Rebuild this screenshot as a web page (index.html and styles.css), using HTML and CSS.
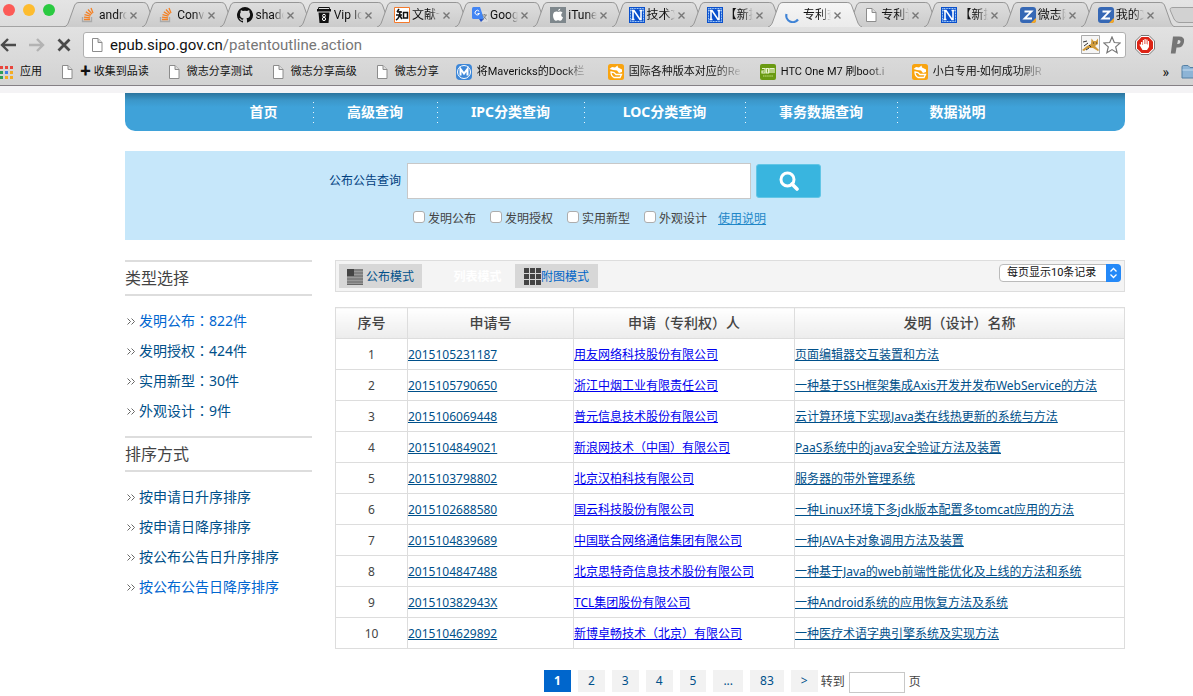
FILE: index.html
```html
<!DOCTYPE html>
<html lang="zh-CN">
<head>
<meta charset="utf-8">
<title>专利查询</title>
<link rel="stylesheet" href="styles.css">
</head>
<body>
<svg class="defs" aria-hidden="true">
  <defs>
    <linearGradient id="tabfill" x1="0" y1="0" x2="0" y2="1"><stop offset="0" stop-color="#dedede"/><stop offset="1" stop-color="#cbcbcb"/></linearGradient>
    <linearGradient id="activefill" x1="0" y1="0" x2="0" y2="1"><stop offset="0" stop-color="#f6f6f6"/><stop offset="1" stop-color="#ebebeb"/></linearGradient>
  </defs>
  <symbol id="shape" viewBox="0 0 94 25" preserveAspectRatio="none"><path d="M0 25C3 24 4 22 5 19L10 5C11 2 12 .5 15 .5H79C82 .5 83 2 84 5L89 19C90 22 91 24 94 25" stroke="#969696" vector-effect="non-scaling-stroke"/></symbol>
  <symbol id="stack" viewBox="0 0 16 16"><path d="M1.500 10V14.500H10.500V10" fill="none" stroke="#aaa" stroke-width="1.300"/><path d="M3 12.500H9M3 10.200L9 10.800M3.500 7.600L9.300 9.200M4.800 4.900L10 8M7 2.500L11 7M10 1L12 6" stroke="#f48024" stroke-width="1.300"/></symbol>
  <symbol id="doc" viewBox="0 0 16 16"><path d="M3.500 1.500H9L13 5.500V14.500H3.500Z" fill="#fff" stroke="#8c8c8c"/><path d="M9 1.500V5.500H13" fill="#ddd" stroke="#8c8c8c"/></symbol>
  <symbol id="ncms" viewBox="0 0 16 16"><path d="M0 0H16V16H0Z" fill="#0a50cc"/><path d="M1.500 1.500H14.500V14.500H1.500Z" fill="none" stroke="#b8dcff" stroke-dasharray="1 .6"/><path d="M4 12.500V3.500H5L11 12.500H12V3.500M2.500 3.500H5.500M2.500 12.500H5.500M10.500 3.500H13.500" fill="none" stroke="#fff" stroke-width="1.600"/></symbol>
  <symbol id="zed" viewBox="0 0 16 16"><rect width="16" height="16" rx="3" fill="#3668b5"/><path d="M4.500 4.500H11.500L4.500 11.500H12" fill="none" stroke="#fff" stroke-width="1.800"/><path d="M16 11V13.500Q16 16 13.500 16H11Z" fill="#f7a823"/></symbol>
  <symbol id="gold" viewBox="0 0 16 16"><rect width="16" height="16" rx="2.500" fill="#f9a410"/><path d="M1.500 5L4 3L7 3.500L9.500 1.500L10 3.500L14 5.500V8L11 9L9 6.500L5 6Z" fill="#fff"/><path d="M3 8L6 8.500L8 10.500H13.500L12 13.500H6Q3 12 3 8Z" fill="none" stroke="#fff" stroke-width="1.300"/></symbol>
  <symbol id="chev" viewBox="0 0 8 7"><path d="M.5 .5L3.500 3.500L.5 6.500M4.500 .5L7.500 3.500L4.500 6.500" fill="none" stroke="#555" stroke-width=".9"/></symbol>
</svg>

<header class="browser">
  <div class="tabstrip">
    <div class="lights"><i class="red"></i><i class="amber"></i><i class="green"></i></div>
    <div class="tabs">
      <div class="tab"><svg class="shape"><use href="#shape"/></svg><svg class="fav"><use href="#stack"/></svg><span>andro</span><button aria-label="关闭"><svg viewBox="0 0 7 7"><path d="M.5 .5L6.500 6.500M6.500 .5L.5 6.500"/></svg></button></div>
      <div class="tab"><svg class="shape"><use href="#shape"/></svg><svg class="fav"><use href="#stack"/></svg><span>Conv</span><button aria-label="关闭"><svg viewBox="0 0 7 7"><path d="M.5 .5L6.500 6.500M6.500 .5L.5 6.500"/></svg></button></div>
      <div class="tab"><svg class="shape"><use href="#shape"/></svg><svg class="fav" viewBox="0 0 16 16"><path d="M8 0A8 8 0 0 0 5.500 15.600C5.900 15.700 6 15.400 6 15.200V13.700C3.800 14.200 3.300 12.700 3.300 12.700C2.900 11.800 2.400 11.500 2.400 11.500C1.700 11 2.500 11 2.500 11C3.300 11.100 3.700 11.800 3.700 11.800C4.400 13.100 5.600 12.700 6.100 12.500C6.100 12 6.300 11.600 6.600 11.400C4.800 11.200 3 10.500 3 7.500C3 6.600 3.300 5.900 3.800 5.300C3.700 5.100 3.400 4.300 3.900 3.200C3.900 3.200 4.600 3 6 4A7.500 7.500 0 0 1 10 4C11.500 3 12.200 3.200 12.200 3.200C12.600 4.300 12.400 5.100 12.300 5.300C12.800 5.900 13.100 6.600 13.100 7.500C13.100 10.500 11.200 11.200 9.400 11.400C9.700 11.700 10 12.200 10 12.900V15.200C10 15.400 10.100 15.700 10.500 15.600A8 8 0 0 0 8 0Z" fill="#111"/></svg><span>shado</span><button aria-label="关闭"><svg viewBox="0 0 7 7"><path d="M.5 .5L6.500 6.500M6.500 .5L.5 6.500"/></svg></button></div>
      <div class="tab"><svg class="shape"><use href="#shape"/></svg><svg class="fav" viewBox="0 0 16 16"><path d="M2.500 0H13.500L14 2H15V4.500H1V2H2ZM2.500 5.500H13.500L12.500 16H3.500Z" fill="#111"/><path d="M3 1.500H13" stroke="#ddd"/><circle cx="8" cy="8.700" r="1.400" fill="none" stroke="#fff"/><circle cx="8" cy="12" r="1.600" fill="none" stroke="#fff"/></svg><span>Vip Ic</span><button aria-label="关闭"><svg viewBox="0 0 7 7"><path d="M.5 .5L6.500 6.500M6.500 .5L.5 6.500"/></svg></button></div>
      <div class="tab"><svg class="shape"><use href="#shape"/></svg><svg class="fav" viewBox="0 0 16 16"><path d="M.5 .5H15.500V15.500H.5Z" fill="#fff" stroke="#f47a2c"/><path d="M5 2L3 5M3 5H8M2 8H8M6 4Q6 11 2 13M6 9L8 12M9.500 5.500H13.500V11H9.500Z" fill="none" stroke="#111" stroke-width="1.500"/></svg><span>文献一</span><button aria-label="关闭"><svg viewBox="0 0 7 7"><path d="M.5 .5L6.500 6.500M6.500 .5L.5 6.500"/></svg></button></div>
      <div class="tab"><svg class="shape"><use href="#shape"/></svg><svg class="fav" viewBox="0 0 16 16"><path d="M6 4H14.500Q16 4 16 5.500V13.500Q16 15 14.500 15H9Z" fill="#ddd"/><path d="M1.500 0H8L12 12H1.500Q0 12 0 10.500V1.500Q0 0 1.500 0Z" fill="#4285f4"/><path d="M7 12H12L9 15Z" fill="#2a56c6"/><path d="M7.200 4.300A2.300 2.300 0 1 0 7.500 6.500H5.500" fill="none" stroke="#fff"/><path d="M10 8H15M12.500 7V8M14 8Q13 11 10.500 12.500M11.500 9L14.500 12.500" fill="none" stroke="#777" stroke-width=".8"/></svg><span>Goog</span><button aria-label="关闭"><svg viewBox="0 0 7 7"><path d="M.5 .5L6.500 6.500M6.500 .5L.5 6.500"/></svg></button></div>
      <div class="tab"><svg class="shape"><use href="#shape"/></svg><svg class="fav" viewBox="0 0 16 16"><path d="M0 0H16V16H0Z" fill="#7e878c"/><path d="M8 5C9 4.500 11 4 12.500 5.700C10.500 7 11 9.500 13 10.300C12.500 12 11.300 13.800 10.300 13.800C9.500 13.800 9 13.300 8 13.300C7 13.300 6.500 13.800 5.800 13.800C4 13.500 2.500 9.500 3.200 7C4 4.500 6.500 4.200 8 5ZM8 4Q8 2 10.300 1.400Q10.500 3.500 8 4Z" fill="#fff"/></svg><span>iTune</span><button aria-label="关闭"><svg viewBox="0 0 7 7"><path d="M.5 .5L6.500 6.500M6.500 .5L.5 6.500"/></svg></button></div>
      <div class="tab"><svg class="shape"><use href="#shape"/></svg><svg class="fav"><use href="#ncms"/></svg><span>技术文</span><button aria-label="关闭"><svg viewBox="0 0 7 7"><path d="M.5 .5L6.500 6.500M6.500 .5L.5 6.500"/></svg></button></div>
      <div class="tab"><svg class="shape"><use href="#shape"/></svg><svg class="fav"><use href="#ncms"/></svg><span>【新提</span><button aria-label="关闭"><svg viewBox="0 0 7 7"><path d="M.5 .5L6.500 6.500M6.500 .5L.5 6.500"/></svg></button></div>
      <div class="tab active"><svg class="shape"><use href="#shape"/></svg><svg class="fav" viewBox="0 0 16 16"><path d="M1.500 7A6.500 6.500 0 0 0 13 12.500" fill="none" stroke="#3f83d6" stroke-width="2.200"/></svg><span>专利查</span><button aria-label="关闭"><svg viewBox="0 0 7 7"><path d="M.5 .5L6.500 6.500M6.500 .5L.5 6.500"/></svg></button></div>
      <div class="tab"><svg class="shape"><use href="#shape"/></svg><svg class="fav"><use href="#doc"/></svg><span>专利讠</span><button aria-label="关闭"><svg viewBox="0 0 7 7"><path d="M.5 .5L6.500 6.500M6.500 .5L.5 6.500"/></svg></button></div>
      <div class="tab"><svg class="shape"><use href="#shape"/></svg><svg class="fav"><use href="#ncms"/></svg><span>【新提</span><button aria-label="关闭"><svg viewBox="0 0 7 7"><path d="M.5 .5L6.500 6.500M6.500 .5L.5 6.500"/></svg></button></div>
      <div class="tab"><svg class="shape"><use href="#shape"/></svg><svg class="fav"><use href="#zed"/></svg><span>微志网</span><button aria-label="关闭"><svg viewBox="0 0 7 7"><path d="M.5 .5L6.500 6.500M6.500 .5L.5 6.500"/></svg></button></div>
      <div class="tab"><svg class="shape"><use href="#shape"/></svg><svg class="fav"><use href="#zed"/></svg><span>我的文</span><button aria-label="关闭"><svg viewBox="0 0 7 7"><path d="M.5 .5L6.500 6.500M6.500 .5L.5 6.500"/></svg></button></div>
    </div>
    <button class="newtab" aria-label="新标签页"><svg viewBox="0 0 26 18"><path d="M30 .5H6Q2 .5 3.500 4L7 12Q9 15.500 12 15.500H30" fill="#d2d2d2" stroke="#a0a0a0"/></svg></button>
  </div>

  <div class="toolbar">
    <button class="nav-back" aria-label="后退"><svg viewBox="0 0 16 14"><path d="M8 1L2 7L8 13M2.500 7H16" fill="none" stroke="#4a4a4a" stroke-width="2.400"/></svg></button>
    <button class="nav-forward" aria-label="前进"><svg viewBox="0 0 16 14"><path d="M8 1L14 7L8 13M0 7H13.500" fill="none" stroke="#b3b3b3" stroke-width="2.400"/></svg></button>
    <button class="nav-stop" aria-label="停止"><svg viewBox="0 0 14 14"><path d="M1.500 1.500L12.500 12.500M12.500 1.500L1.500 12.500" stroke="#4a4a4a" stroke-width="2.800"/></svg></button>
    <div class="omnibox">
      <svg class="fav"><use href="#doc"/></svg>
      <a class="url" href="#">epub.sipo.gov.cn<span>/patentoutline.action</span></a>
      <svg class="cat" viewBox="0 0 19 19"><path d="M.5 .5H18.500V18.500H.5Z" fill="#f5f5f5" stroke="#aaa"/><path d="M1 15L6 11L10 9L10.500 3.500L12.500 6L15 6L17 3.500V9L14 11L18 15L17 16L12 13L7 13L3 16Z" fill="#cf9a3b"/><path d="M2 7L6 6M3 11L7 8M8 10L10 12M12 8H13M15 8H16M5 15L8 13" stroke="#333"/></svg>
      <svg class="star" viewBox="0 0 18 18"><path d="M9 1L11.300 6.500L17.200 7L12.700 10.900L14.100 16.700L9 13.600L3.900 16.700L5.300 10.900L.8 7L6.700 6.500Z" fill="#fff" stroke="#777" stroke-width="1.200"/></svg>
    </div>
    <svg class="ext-block" viewBox="0 0 20 20"><path d="M6 .5H14L19.500 6V14L14 19.500H6L.5 14V6Z" fill="#fff" stroke="#777"/><path d="M6.500 2H13.500L18 6.500V13.500L13.500 18H6.500L2 13.500V6.500Z" fill="#dd2416"/><path d="M6 7V10L5 9L4.500 10L7.500 15H12L14 12V6H13V9.500H12.500V4.500H11.300V9H10.700V4H9.500V9H9V5H7.800V10H7.300V7Z" fill="#fff"/></svg>
    <svg class="ext-p" viewBox="0 0 16 18"><path d="M3 .5H9Q15 .5 14 6Q13 11.500 8 11.500H6.500L5.500 17.500H.8ZM8 4L7.200 8Q10 8.500 10.500 6Q10.900 4 8 4Z" fill="#757575" fill-rule="evenodd"/></svg>
  </div>

  <nav class="bookmarks">
    <a class="apps" href="#"><svg viewBox="0 0 13 13"><path d="M0 0H3V3H0ZM5 0H8V3H5ZM10 0H13V3H10Z" fill="#e8453c"/><path d="M0 5H3V8H0Z" fill="#2f9e58"/><path d="M5 5H8V8H5Z" fill="#3f7fe8"/><path d="M10 5H13V8H10ZM10 10H13V13H10ZM5 10H8V13H5Z" fill="#f4ac22"/><path d="M0 10H3V13H0Z" fill="#2f9e58"/></svg><span>应用</span></a>
    <a href="#"><svg><use href="#doc"/></svg><span>✚ 收集到品读</span></a>
    <a href="#"><svg><use href="#doc"/></svg><span>微志分享测试</span></a>
    <a href="#"><svg><use href="#doc"/></svg><span>微志分享高级</span></a>
    <a href="#"><svg><use href="#doc"/></svg><span>微志分享</span></a>
    <a class="long" href="#"><svg viewBox="0 0 16 16"><rect width="16" height="16" rx="4" fill="#3d87d8"/><circle cx="8" cy="8" r="6.500" fill="none" stroke="#fff"/><path d="M4.500 11.500V5L8 9.500L11.500 5V11.500" fill="none" stroke="#fff" stroke-width="2"/></svg><span>将Mavericks的Dock栏</span></a>
    <a class="long" href="#"><svg><use href="#gold"/></svg><span>国际各种版本对应的Re</span></a>
    <a class="long" href="#"><svg viewBox="0 0 16 16"><rect width="16" height="16" rx="2" fill="#6a9a12"/><path d="M2 4.500H5V9H2V7H4M6.500 4.500V9H8.500V4.500ZM10 9V4.500H14V9M12 4.500V9" fill="none" stroke="#e8f3cc" stroke-width="1.200"/><path d="M3 12H13" stroke="#c5df83" stroke-dasharray="1.500 .6"/></svg><span>HTC One M7 刷boot.i</span></a>
    <a class="long" href="#"><svg><use href="#gold"/></svg><span>小白专用-如何成功刷R</span></a>
    <button class="more" aria-label="更多书签">»</button>
    <svg class="folder" viewBox="0 0 12 14"><path d="M1 13V2Q1 .5 2.500 .5H7L9 2.500H14V13Z" fill="#8db4d6" stroke="#5580a5"/><path d="M1.500 5H14" stroke="#c5dcef"/></svg>
  </nav>
</header>

<div class="page">
  <nav class="mainnav">
    <a href="#">首页</a><a href="#">高级查询</a><a href="#">IPC分类查询</a><a href="#">LOC分类查询</a><a href="#">事务数据查询</a><a href="#">数据说明</a>
  </nav>

  <form class="search">
    <div class="query">
      <label for="q">公布公告查询</label>
      <input id="q" type="text">
      <button type="button" aria-label="查询"><svg viewBox="0 0 20 20"><circle cx="8.500" cy="8.500" r="6.500" fill="none" stroke="#fff" stroke-width="3"/><path d="M13 13L18 18" stroke="#fff" stroke-width="3.600" stroke-linecap="round"/></svg></button>
    </div>
    <div class="kinds">
      <label><input type="checkbox">发明公布</label>
      <label><input type="checkbox">发明授权</label>
      <label><input type="checkbox">实用新型</label>
      <label><input type="checkbox">外观设计</label>
      <a href="#">使用说明</a>
    </div>
  </form>

  <div class="columns">
    <aside class="sidebar">
      <h2>类型选择</h2>
      <ul>
        <li><svg><use href="#chev"/></svg><a class="current" href="#">发明公布<span class="mid" lang="zh-Hant">：</span>822件</a></li>
        <li><svg><use href="#chev"/></svg><a href="#">发明授权<span class="mid" lang="zh-Hant">：</span>424件</a></li>
        <li><svg><use href="#chev"/></svg><a href="#">实用新型<span class="mid" lang="zh-Hant">：</span>30件</a></li>
        <li><svg><use href="#chev"/></svg><a href="#">外观设计<span class="mid" lang="zh-Hant">：</span>9件</a></li>
      </ul>
      <h2>排序方式</h2>
      <ul>
        <li><svg><use href="#chev"/></svg><a href="#">按申请日升序排序</a></li>
        <li><svg><use href="#chev"/></svg><a href="#">按申请日降序排序</a></li>
        <li><svg><use href="#chev"/></svg><a href="#">按公布公告日升序排序</a></li>
        <li><svg><use href="#chev"/></svg><a class="current" href="#">按公布公告日降序排序</a></li>
      </ul>
    </aside>

    <main class="results">
      <div class="modes">
        <button class="mode"><svg class="lines" viewBox="0 0 16 16"><path d="M0 0H16V16H0Z" fill="#999"/><path d="M0 1H16M0 4H16M0 7H16M0 10H16M0 13H16M0 15.500H16" stroke="#666" stroke-width="1"/><path d="M0 0H7V7H0Z" fill="#444"/></svg>公布模式</button>
        <button class="mode selected">列表模式</button>
        <button class="mode picture"><svg viewBox="0 0 17 17"><path d="M0 0H5V5H0ZM6 0H11V5H6ZM12 0H17V5H12ZM0 6H5V11H0ZM6 6H11V11H6ZM12 6H17V11H12ZM0 12H5V17H0ZM6 12H11V17H6ZM12 12H17V17H12Z" fill="#444"/></svg>附图模式</button>
        <div class="pagesize">
          <select aria-label="每页显示"><option>每页显示10条记录</option></select>
          <svg viewBox="0 0 15 18"><path d="M0 0H11Q15 0 15 4V14Q15 18 11 18H0Z" fill="#2489f8"/><path d="M4.500 7.500L7.500 4.500L10.500 7.500M4.500 10.500L7.500 13.500L10.500 10.500" fill="none" stroke="#fff" stroke-width="1.300"/></svg>
        </div>
      </div>

      <table>
        <colgroup><col class="c-no"><col class="c-app"><col class="c-owner"><col></colgroup>
        <thead><tr><th>序号</th><th>申请号</th><th>申请<span class="mid" lang="zh-Hant">（</span>专利权<span class="mid" lang="zh-Hant">）</span>人</th><th>发明<span class="mid" lang="zh-Hant">（</span>设计<span class="mid" lang="zh-Hant">）</span>名称</th></tr></thead>
        <tbody>
          <tr><td>1</td><td><a href="#">2015105231187</a></td><td><a href="#">用友网络科技股份有限公司</a></td><td><a href="#">页面编辑器交互装置和方法</a></td></tr>
          <tr><td>2</td><td><a href="#">2015105790650</a></td><td><a href="#">浙江中烟工业有限责任公司</a></td><td><a href="#">一种基于SSH框架集成Axis开发并发布WebService的方法</a></td></tr>
          <tr><td>3</td><td><a href="#">2015106069448</a></td><td><a href="#">普元信息技术股份有限公司</a></td><td><a href="#">云计算环境下实现Java类在线热更新的系统与方法</a></td></tr>
          <tr><td>4</td><td><a href="#">2015104849021</a></td><td><a href="#">新浪网技术<span class="mid" lang="zh-Hant">（</span>中国<span class="mid" lang="zh-Hant">）</span>有限公司</a></td><td><a href="#">PaaS系统中的java安全验证方法及装置</a></td></tr>
          <tr><td>5</td><td><a href="#">2015103798802</a></td><td><a href="#">北京汉柏科技有限公司</a></td><td><a href="#">服务器的带外管理系统</a></td></tr>
          <tr><td>6</td><td><a href="#">2015102688580</a></td><td><a href="#">国云科技股份有限公司</a></td><td><a href="#">一种Linux环境下多jdk版本配置多tomcat应用的方法</a></td></tr>
          <tr><td>7</td><td><a href="#">2015104839689</a></td><td><a href="#">中国联合网络通信集团有限公司</a></td><td><a href="#">一种JAVA卡对象调用方法及装置</a></td></tr>
          <tr><td>8</td><td><a href="#">2015104847488</a></td><td><a href="#">北京思特奇信息技术股份有限公司</a></td><td><a href="#">一种基于Java的web前端性能优化及上线的方法和系统</a></td></tr>
          <tr><td>9</td><td><a href="#">201510382943X</a></td><td><a href="#">TCL集团股份有限公司</a></td><td><a href="#">一种Android系统的应用恢复方法及系统</a></td></tr>
          <tr><td>10</td><td><a href="#">2015104629892</a></td><td><a href="#">新博卓畅技术<span class="mid" lang="zh-Hant">（</span>北京<span class="mid" lang="zh-Hant">）</span>有限公司</a></td><td><a href="#">一种医疗术语字典引擎系统及实现方法</a></td></tr>
        </tbody>
      </table>

      <div class="pager">
        <a class="on" href="#">1</a><a href="#">2</a><a href="#">3</a><a href="#">4</a><a href="#">5</a><a href="#">...</a><a href="#">83</a><a href="#">&gt;</a>
        <div class="jump"><label for="goto">转到</label><input id="goto" type="text"><span>页</span></div>
      </div>
    </main>
  </div>
</div>
</body>
</html>
```
FILE: styles.css
```css
* { box-sizing: border-box; }
body {
  margin: 0;
  overflow-x: hidden;
  background: #fff;
  color: #444;
  font: 12px/18px "Noto Sans", "Noto Sans CJK SC", sans-serif;
}
a { text-decoration: none; color: inherit; }
button { border: 0; padding: 0; background: none; font: inherit; color: inherit; }
svg { display: block; flex: none; }
.defs { position: absolute; width: 0; height: 0; }
.mid { font-family: "Noto Sans CJK TC", sans-serif; line-height: 1; }

/* browser frame */
.browser {
  height: 93px;
  border-bottom: 7px solid #f4f3f5;
  background: linear-gradient(#e9e9e9, #d2d2d2);
  box-shadow: inset 0 -1px #858085;
  font-family: Roboto, "Noto Sans CJK SC", sans-serif;
  color: #111;
  overflow: hidden;
}
.tabstrip { display: flex; height: 27px; background: linear-gradient(#e4e4e4, #dcdcdc); box-shadow: inset 0 -1px #a3a3a3; }
.lights { flex: none; width: 72px; display: flex; gap: 8px; padding: 4px 0 0 3px; }
.lights i { width: 12px; height: 12px; border-radius: 50%; }
.red { background: #fc5b57; }
.amber { background: #fdbc2f; }
.green { background: #2aca41; }
.tabs { flex: 1; min-width: 0; display: flex; }
.tab { position: relative; flex: 1 1 0; min-width: 0; display: flex; align-items: center; padding: 3px 13px 0 9px; font-size: 12px; line-height: 18px; }
.shape { position: absolute; left: -8px; top: 2px; width: calc(100% + 16px); height: 25px; fill: url(#tabfill); }
.active { z-index: 2; }
.active .shape { fill: url(#activefill); }
.fav { position: relative; width: 16px; height: 16px; }
.tab span {
  position: relative; flex: 1; min-width: 0; margin-left: 2px; overflow: hidden; white-space: nowrap;
  mask-image: linear-gradient(90deg, #000 65%, transparent);
}
.tab button { position: relative; width: 7px; margin-left: 3px; }
.tab button svg { width: 7px; height: 7px; stroke: #777; stroke-width: 1.400; }
.newtab { flex: none; width: 26px; padding-top: 7px; align-self: flex-start; }
.newtab svg { width: 26px; height: 18px; }

.toolbar { display: flex; align-items: center; height: 34px; padding: 1px 0 0; }
.nav-back svg, .nav-forward svg { width: 16px; height: 14px; }
.nav-forward { margin-left: 13px; }
.nav-stop { margin: 0 12px 0 12px; }
.nav-stop svg { width: 14px; height: 14px; }
.omnibox { flex: 1; display: flex; align-items: center; height: 26px; padding: 0 4px 0 5px; border: 1px solid #b0b0b0; border-radius: 3px; background: #fff; }
.url { flex: 1; margin-left: 5px; font-size: 15px; line-height: 22px; color: #111; }
.url span { color: #777; }
.cat { width: 19px; height: 19px; }
.star { width: 18px; height: 18px; margin-left: 3px; }
.ext-block { width: 20px; height: 20px; margin-left: 9px; }
.ext-p { width: 16px; height: 18px; margin: 0 7px 0 15px; }

.bookmarks { display: flex; align-items: center; gap: 17px; height: 22px; font-size: 11px; line-height: 16px; white-space: nowrap; }
.bookmarks a { display: flex; align-items: center; gap: 5px; flex: none; }
.bookmarks a svg { width: 16px; height: 16px; }
.bookmarks .apps { gap: 7px; }
.bookmarks .apps svg { width: 13px; height: 13px; }
.long span { width: 114px; overflow: hidden; mask-image: linear-gradient(90deg, #000 75%, transparent); }
.more { margin-left: auto; font-size: 14px; }
.folder { width: 12px; height: 14px; margin-left: -5px; }

/* site */
.page { margin: 0 68px 0 125px; }
.mainnav {
  display: grid;
  grid-template-columns: 99fr 124fr 147fr 161fr 152fr 121fr;
  height: 38px;
  padding: 7px 107px 0 89px;
  border-radius: 0 0 10px 10px;
  background: linear-gradient(#2b749d, #3b96c8 7px, #3fa2d9 14px);
}
.mainnav a { height: 24px; text-align: center; font-size: 14px; line-height: 24px; font-weight: 700; color: #fff; }
.mainnav a + a { background: repeating-linear-gradient(transparent 0 2px, #e8f5fd 2px 3px, transparent 3px 5px) left / 1px 100% no-repeat; }

.search { margin-top: 20px; padding: 12px 0 12px 204px; height: 89px; background: #c6e7fa; }
.query { display: flex; align-items: center; }
.query label { width: 78px; color: #004080; line-height: 36px; }
.query input { width: 344px; height: 36px; border: 1px solid #c8c8c8; background: #fff; }
.query button { display: flex; align-items: center; justify-content: center; width: 65px; height: 34px; margin-left: 5px; border: 1px solid #62c6e6; border-radius: 3px; background: #39b5df; }
.query button svg { width: 20px; height: 20px; }
.kinds { display: flex; gap: 14px; margin: 11px 0 0 84px; }
.kinds label { display: flex; align-items: center; gap: 3px; }
.kinds input { appearance: none; width: 12px; height: 12px; margin: 0 0 4px; border: 1px solid #adadad; border-radius: 3px; background: #fff; }
.kinds a { margin-left: -3px; color: #1f87c8; text-decoration: underline; }

.columns { display: flex; gap: 23px; margin-top: 20px; }
.sidebar { flex: none; width: 187px; }
.sidebar h2 { margin: 0; border: solid #ddd; border-width: 2px 0; font-size: 16px; line-height: 32px; font-weight: 400; color: #444; }
.sidebar ul { margin: 0; padding: 10px 0; list-style: none; }
.sidebar li { display: flex; align-items: center; gap: 4px; height: 30px; padding-left: 2px; font-size: 14px; line-height: 30px; color: #00508a; }
.sidebar li svg { width: 8px; height: 7px; }
.sidebar .current { color: #0066d0; }

.results { flex: 1; min-width: 0; }
.modes { display: flex; gap: 5px; height: 32px; padding: 3px; border: 1px solid #ddd; background: #f4f4f4; }
.mode { display: flex; align-items: center; justify-content: center; gap: 3px; width: 83px; height: 24px; padding-top: 1px; background: #d7d7d7; color: #00508a; }
.mode .lines { width: 16px; height: 16px; }
.mode.selected { padding-left: 18px; background: none; color: #fff; font-weight: 700; }
.mode.picture { gap: 0; color: #0066c8; }
.picture svg { width: 17px; height: 17px; }
.pagesize { position: relative; width: 122px; height: 18px; margin-left: auto; }
.pagesize select { appearance: none; display: block; width: 100%; height: 18px; padding: 0 16px 0 7px; border: 1px solid #bbb; border-radius: 4px; background: #fff; font: 11px/16px Roboto, "Noto Sans CJK SC", sans-serif; color: #111; }
.pagesize svg { position: absolute; right: 0; top: 0; width: 15px; height: 18px; pointer-events: none; }

table { width: 100%; margin-top: 15px; border-collapse: collapse; table-layout: fixed; }
.c-no { width: 72px; }
.c-app { width: 166px; }
.c-owner { width: 221px; }
th, td { height: 31px; padding: 0; border: 1px solid #ddd; text-align: left; white-space: nowrap; }
th { background: linear-gradient(#fff, #ececec); text-align: center; font-size: 14px; font-weight: 500; }
td { padding-top: 2px; }
td:first-child { text-align: center; }
td a { color: #00508a; text-decoration: underline; }
td:nth-child(3) a { color: #0000ee; }

.pager { display: flex; align-items: flex-start; gap: 7px; margin: 21px 0 0 209px; line-height: 22px; }
.pager > a { padding: 0 10px; background: #f2f2f2; color: #00508a; }
.pager .on { background: #0066cc; color: #fff; font-weight: 700; }
.jump { display: flex; gap: 4px; margin-left: -4px; line-height: 24px; }
.jump input { width: 56px; height: 21px; margin-top: 2px; border: 1px solid #c8c8c8; background: #fff; }
```
